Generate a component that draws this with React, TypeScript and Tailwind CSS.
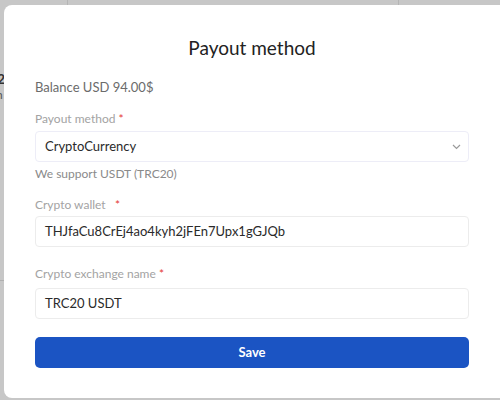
import React from "react";

function Field({ label, gapLabel, children }: { label: React.ReactNode; gapLabel: string; children: React.ReactNode }) {
  return (
    <div className={`flex flex-col ${gapLabel}`}>
      <div className="text-[12px] text-[#a3a3a3] leading-[16px]">{label}</div>
      {children}
    </div>
  );
}

export default function App() {
  const font = { fontFamily: "Lato, 'Noto Sans', sans-serif" };
  return (
    <div className="relative w-[500px] h-[400px] overflow-hidden bg-[#c7c7c7] flex pl-[4px] pt-[5px]" style={font}>
      {/* background hints behind the modal */}
      <div className="absolute left-[67px] top-0 h-[5px] w-px bg-[#b5b5b5]" />
      <div className="absolute left-[398px] top-0 h-[5px] w-px bg-[#b5b5b5]" />
      <div className="absolute left-0 top-[280px] h-px w-[4px] bg-[#b0b0b0]" />
      <div className="absolute left-[-3px] top-[68px] text-[14px] font-bold text-[#333]">2</div>
      <div className="absolute left-[-4px] top-[86px] text-[12px] text-[#555]">n</div>

      <div className="relative w-[504px] h-[393px] shrink-0 bg-white rounded-[8px] pl-[31px] pr-[39px] pt-[30px] flex flex-col">
        <div className="text-center text-[19px] text-[#222] leading-[26px]">Payout method</div>
        <div className="mt-[17px] text-[13px] text-[#6b6b6b] leading-[18px]">Balance USD 94.00$</div>

        <div className="mt-[15px] flex flex-col">
          <Field
            gapLabel="gap-[4px]"
            label={
              <>
                Payout method <span className="text-[#e53935]">*</span>
              </>
            }
          >
            <div className="h-[31px] border border-[#ededf7] rounded-[4px] flex items-center justify-between pl-[9px] pr-[7px]">
              <span className="text-[13px] text-[#2a2a2a]">CryptoCurrency</span>
              <svg width="9" height="6" viewBox="0 0 9 6" fill="none">
                <path d="M1 1l3.5 3.5L8 1" stroke="#9a9a9a" strokeWidth="1.2" />
              </svg>
            </div>
          </Field>
          <div className="mt-[4px] text-[12px] text-[#8a8a8a] leading-[16px]">We support USDT (TRC20)</div>

          <div className="mt-[15px]">
            <Field
              gapLabel="gap-[3px]"
              label={
                <>
                  Crypto wallet&nbsp;&nbsp; <span className="text-[#e53935]">*</span>
                </>
              }
            >
              <div className="h-[31px] border border-[#ececec] rounded-[4px] flex items-center pl-[9px]">
                <span className="text-[13px] text-[#2a2a2a]">THJfaCu8CrEj4ao4kyh2jFEn7Upx1gGJQb</span>
              </div>
            </Field>
          </div>

          <div className="mt-[19px]">
            <Field
              gapLabel="gap-[6px]"
              label={
                <>
                  Crypto exchange name <span className="text-[#e53935]">*</span>
                </>
              }
            >
              <div className="h-[31px] border border-[#ececec] rounded-[4px] flex items-center pl-[9px]">
                <span className="text-[13px] text-[#2a2a2a]">TRC20 USDT</span>
              </div>
            </Field>
          </div>

          <button className="mt-[18px] w-full h-[31px] rounded-[5px] bg-[#1b54c3] text-white text-[13px] font-bold">
            Save
          </button>
        </div>
      </div>
    </div>
  );
}
